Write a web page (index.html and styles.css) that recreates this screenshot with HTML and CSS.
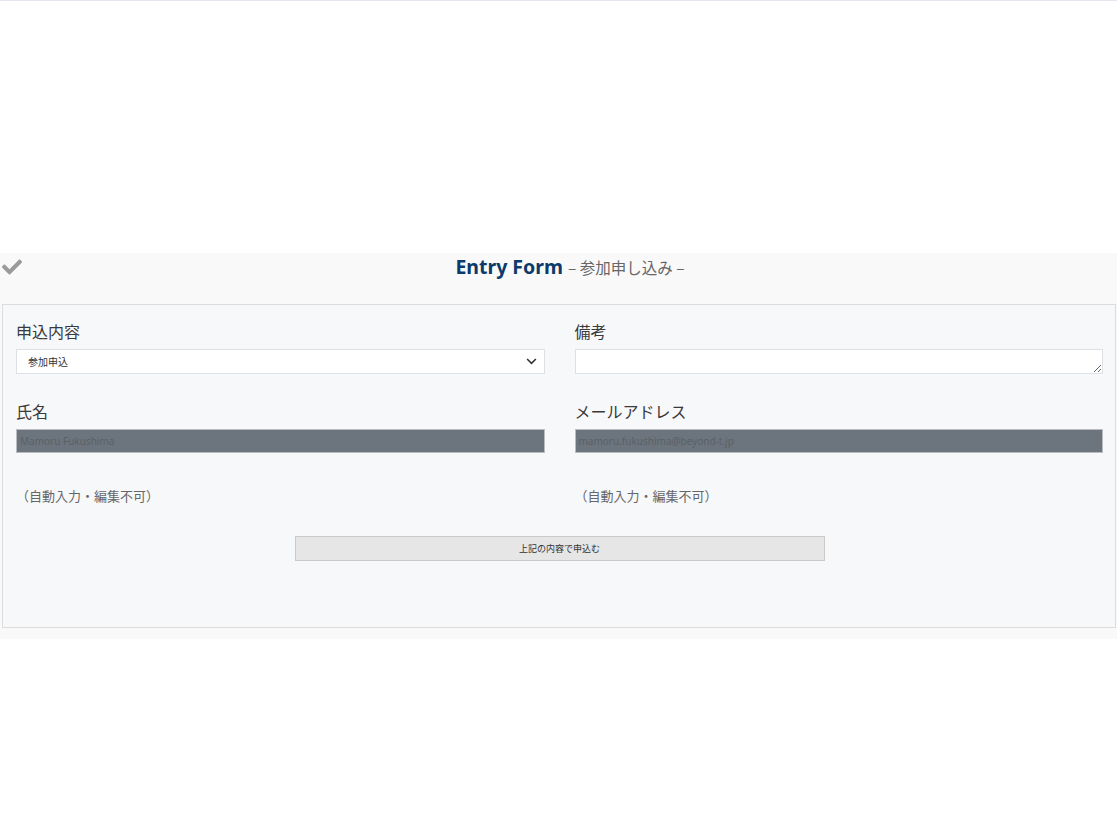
FILE: index.html
```html
<!DOCTYPE html>
<html lang="ja">
<head>
  <meta charset="UTF-8">
  <meta name="viewport" content="width=device-width, initial-scale=1.0">
  <title>Entry Form</title>
  <link rel="stylesheet" href="styles.css">
</head>
<body>
  <div class="top-line"></div>

  <!-- Entry section -->
  <section class="entry">
    <div class="entry-head">
      <svg class="check" viewBox="0 0 512 512" width="20" height="20" aria-hidden="true">
        <path fill="#9a9a9a" d="M173.9 439.4l-166.4-166.4c-10-10-10-26.2 0-36.2l36.2-36.2c10-10 26.2-10 36.2 0L192 312.7 432.1 72.6c10-10 26.2-10 36.2 0l36.2 36.2c10 10 10 26.2 0 36.2l-294.4 294.4c-10 10-26.2 10-36.2 0z"/>
      </svg>
      <h2 class="entry-title">Entry Form <span class="sub">– 参加申し込み –</span></h2>
    </div>

    <form class="panel">
      <div class="grid">
        <div class="field">
          <label for="kind">申込内容</label>
          <div class="select-wrap">
            <select id="kind">
              <option>参加申込</option>
            </select>
            <svg class="chev" viewBox="0 0 12 8" width="11" height="7" aria-hidden="true">
              <path d="M1 1.2l5 5 5-5" fill="none" stroke="#333" stroke-width="1.8"/>
            </svg>
          </div>
        </div>
        <div class="field">
          <label for="note">備考</label>
          <textarea id="note"></textarea>
        </div>
        <div class="field">
          <label for="name">氏名</label>
          <input id="name" class="locked" type="text" value="Mamoru Fukushima" readonly>
          <p class="hint">（自動入力・編集不可）</p>
        </div>
        <div class="field">
          <label for="mail">メールアドレス</label>
          <input id="mail" class="locked" type="text" value="mamoru.fukushima@beyond-t.jp" readonly>
          <p class="hint">（自動入力・編集不可）</p>
        </div>
      </div>
      <div class="actions">
        <button type="button" class="submit">上記の内容で申込む</button>
      </div>
    </form>
  </section>
</body>
</html>
```

FILE: styles.css
```css
body {
  margin: 0;
  background: #fff;
  color: #333;
  font-family: "Noto Sans", "Noto Sans CJK JP", sans-serif;
}

.top-line {
  height: 1px;
  background: #e6e5ee;
  margin-bottom: 252px;
}

/* Entry section */
.entry {
  background: #f9f9f9;
  padding: 0 1px 11px 2px;
}
.entry-head {
  display: flex;
  align-items: flex-start;
  height: 51px;
}
.check {
  flex: none;
  margin-top: 4px;
}
.entry-title {
  flex: 1;
  margin: -1px 0 0;
  padding-left: 2px;
  text-align: center;
  font-size: 19.5px;
  line-height: 30px;
  font-weight: 700;
  color: #0c3a6a;
}
.entry-title .sub {
  font-family: "Noto Sans CJK JP", sans-serif;
  font-size: 15.5px;
  font-weight: 400;
  color: #666;
}

/* Panel */
.panel {
  background: #f7f8fa;
  border: 1px solid #dcdcdc;
  padding: 14px 12px 66px 13px;
}
.grid {
  display: grid;
  grid-template-columns: 1fr 1fr;
  column-gap: 30px;
  row-gap: 25px;
}
.field label {
  display: block;
  font-family: "Noto Sans CJK JP", sans-serif;
  font-size: 16px;
  line-height: 24px;
  margin-bottom: 6px;
  color: #3a3a3a;
}
.select-wrap {
  position: relative;
}
.select-wrap select {
  display: block;
  width: 100%;
  height: 25px;
  appearance: none;
  -webkit-appearance: none;
  background: #fff;
  border: 1px solid #dde0e4;
  border-radius: 0;
  padding: 0 11px;
  font-family: "Noto Sans CJK JP", sans-serif;
  font-size: 10px;
  color: #333;
}
.select-wrap .chev {
  position: absolute;
  right: 8px;
  top: 9px;
}
.field textarea {
  display: block;
  width: 100%;
  height: 25px;
  box-sizing: border-box;
  background: #fff;
  border: 1px solid #dde0e4;
  border-radius: 0;
  margin: 0;
}
.locked {
  display: block;
  width: 100%;
  height: 24px;
  box-sizing: border-box;
  background: #6c757d;
  border: 1px solid #b9bcc0;
  border-radius: 0;
  padding: 0 3px;
  font-family: "Noto Sans", sans-serif;
  font-size: 10px;
  color: #5a6067;
}
.hint {
  margin: 34px 0 0;
  font-family: "Noto Sans CJK JP", sans-serif;
  font-size: 13px;
  line-height: 18px;
  color: #666;
}

.actions {
  display: flex;
  justify-content: center;
  margin-top: 31px;
}
.submit {
  width: 530px;
  height: 25px;
  background: #e6e6e6;
  border: 1px solid #cacaca;
  border-radius: 0;
  font-family: "Noto Sans CJK JP", sans-serif;
  font-size: 9px;
  color: #333;
}
```
